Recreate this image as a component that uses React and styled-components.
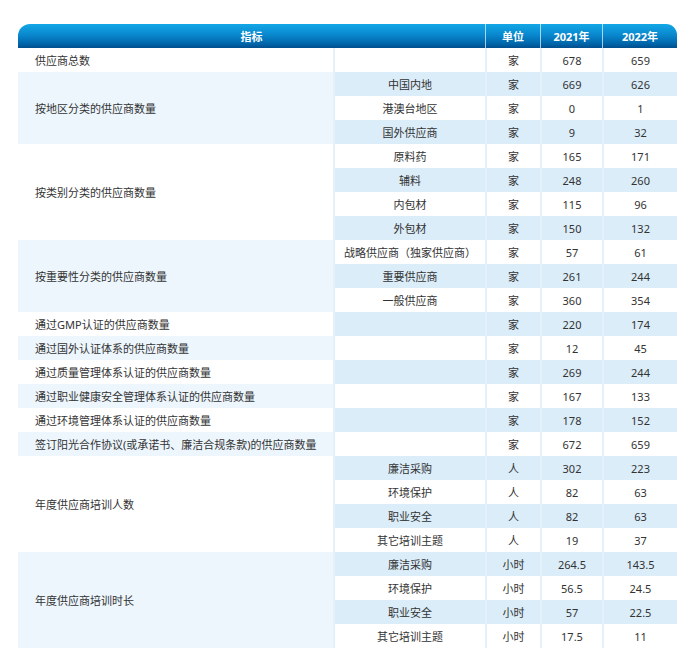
import React from "react";
import styled, { createGlobalStyle } from "styled-components";

const Global = createGlobalStyle`
  html, body { margin: 0; padding: 0; background: #ffffff; }
  body { font-family: "Noto Sans", "Noto Sans CJK SC", sans-serif; }
`;

const Page = styled.div`
  padding: 24px 0 0 18px;
`;

const Table = styled.table`
  width: 659px;
  table-layout: fixed;
  border-collapse: separate;
  border-spacing: 0;
  font-family: "Noto Sans", "Noto Sans CJK SC", sans-serif;
  font-size: 11px;
  color: #333333;
`;

const Col = styled.col`
  width: ${(p) => p.$w}px;
`;

const HeadCell = styled.th`
  height: 24px;
  padding: 0;
  box-sizing: border-box;
  font-weight: 700;
  font-size: 11px;
  color: #ffffff;
  text-align: center;
  vertical-align: middle;
  line-height: 1;
  background: linear-gradient(#12a7e6 0%, #0a88ce 45%, #0066aa 82%, #004e8c 100%);
  border-left: ${(p) => (p.$first ? "none" : "1px solid rgba(220,240,252,0.75)")};
  border-top-left-radius: ${(p) => (p.$first ? "12px" : "0")};
  border-top-right-radius: ${(p) => (p.$last ? "11px" : "0")};
`;

const MainCell = styled.td`
  height: 24px;
  padding: 0 0 0 17px;
  box-sizing: border-box;
  text-align: left;
  vertical-align: middle;
  line-height: 1;
  white-space: nowrap;
  background: ${(p) => (p.$shade ? "#edf6fd" : "#ffffff")};
`;

const DataCell = styled.td`
  height: 24px;
  padding: 0;
  box-sizing: border-box;
  text-align: center;
  vertical-align: middle;
  line-height: 1;
  white-space: nowrap;
  border-left: 2px solid #e4f1fb;
  background: ${(p) => (p.$stripe ? "#dbedf9" : "#ffffff")};
`;

const columns = [315, 152, 55, 62, 75];

const groups = [
  { main: "供应商总数", rows: [["", "家", "678", "659"]] },
  {
    main: "按地区分类的供应商数量",
    rows: [
      ["中国内地", "家", "669", "626"],
      ["港澳台地区", "家", "0", "1"],
      ["国外供应商", "家", "9", "32"],
    ],
  },
  {
    main: "按类别分类的供应商数量",
    rows: [
      ["原料药", "家", "165", "171"],
      ["辅料", "家", "248", "260"],
      ["内包材", "家", "115", "96"],
      ["外包材", "家", "150", "132"],
    ],
  },
  {
    main: "按重要性分类的供应商数量",
    rows: [
      ["战略供应商（独家供应商）", "家", "57", "61"],
      ["重要供应商", "家", "261", "244"],
      ["一般供应商", "家", "360", "354"],
    ],
  },
  { main: "通过GMP认证的供应商数量", rows: [["", "家", "220", "174"]] },
  { main: "通过国外认证体系的供应商数量", rows: [["", "家", "12", "45"]] },
  { main: "通过质量管理体系认证的供应商数量", rows: [["", "家", "269", "244"]] },
  { main: "通过职业健康安全管理体系认证的供应商数量", rows: [["", "家", "167", "133"]] },
  { main: "通过环境管理体系认证的供应商数量", rows: [["", "家", "178", "152"]] },
  { main: "签订阳光合作协议(或承诺书、廉洁合规条款)的供应商数量", rows: [["", "家", "672", "659"]] },
  {
    main: "年度供应商培训人数",
    rows: [
      ["廉洁采购", "人", "302", "223"],
      ["环境保护", "人", "82", "63"],
      ["职业安全", "人", "82", "63"],
      ["其它培训主题", "人", "19", "37"],
    ],
  },
  {
    main: "年度供应商培训时长",
    rows: [
      ["廉洁采购", "小时", "264.5", "143.5"],
      ["环境保护", "小时", "56.5", "24.5"],
      ["职业安全", "小时", "57", "22.5"],
      ["其它培训主题", "小时", "17.5", "11"],
    ],
  },
];

export default function App() {
  let rowIndex = 0;
  const body = [];
  groups.forEach((g, gi) => {
    g.rows.forEach((r, ri) => {
      const stripe = rowIndex % 2 === 1;
      body.push(
        <tr key={`${gi}-${ri}`}>
          {ri === 0 && (
            <MainCell rowSpan={g.rows.length} $shade={gi % 2 === 1}>
              {g.main}
            </MainCell>
          )}
          {r.map((v, ci) => (
            <DataCell key={ci} $stripe={stripe}>
              {v}
            </DataCell>
          ))}
        </tr>
      );
      rowIndex += 1;
    });
  });

  return (
    <Page>
      <Global />
      <Table>
        <colgroup>
          {columns.map((w, i) => (
            <Col key={i} $w={w} />
          ))}
        </colgroup>
        <thead>
          <tr>
            <HeadCell colSpan={2} $first>
              指标
            </HeadCell>
            <HeadCell>单位</HeadCell>
            <HeadCell>2021年</HeadCell>
            <HeadCell $last>2022年</HeadCell>
          </tr>
        </thead>
        <tbody>{body}</tbody>
      </Table>
    </Page>
  );
}
